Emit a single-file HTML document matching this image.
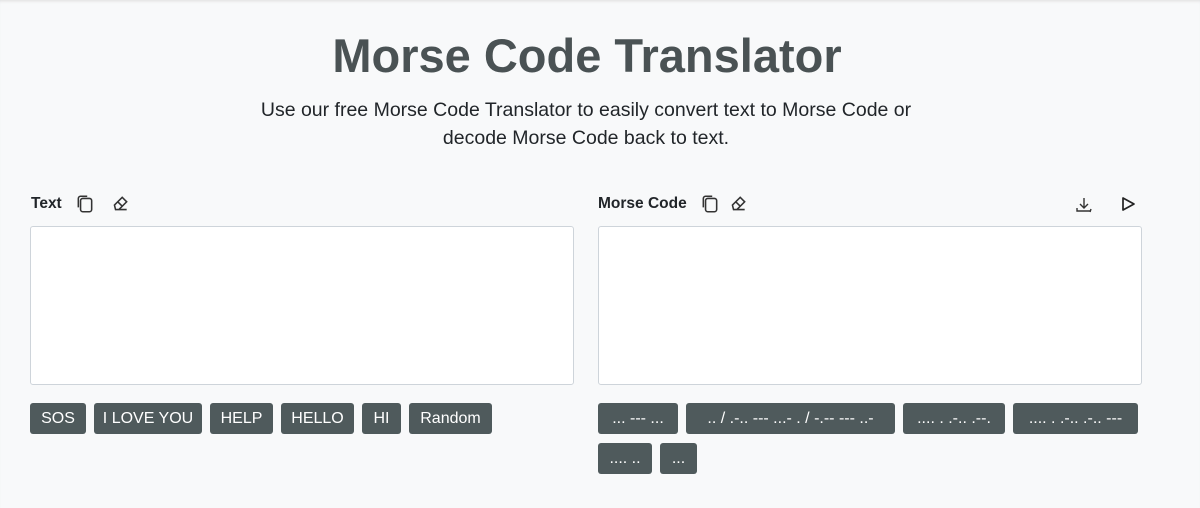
<!DOCTYPE html>
<html><head><style>
body{margin:0;width:1200px;height:508px;background:#f8f9fa;font-family:"Liberation Sans",sans-serif;position:relative;overflow:hidden;box-shadow:inset 0 3px 3px -2px #ddd}
h1{position:absolute;top:28px;left:-13px;width:1200px;margin:0;text-align:center;font-size:47px;font-weight:bold;color:#4a5254;letter-spacing:0}
p{position:absolute;top:96px;left:-14px;width:1200px;margin:0;text-align:center;font-size:19.5px;line-height:28px;color:#212529}
.lbl{position:absolute;top:195px;font-size:15.5px;font-weight:bold;color:#212529}
.ta{position:absolute;top:226px;width:542px;height:157px;background:#fff;border:1px solid #ced4da;border-radius:3px}
.b{position:absolute;height:31px;background:#4f5a5c;color:#fff;border-radius:3px;font-size:16px;line-height:31px;text-align:center}
svg{position:absolute}
</style></head><body>
<h1>Morse Code Translator</h1>
<p>Use our free Morse Code Translator to easily convert text to Morse Code or<br>decode Morse Code back to text.</p>
<div class="lbl" style="left:31px">Text</div>
<svg style="left:75px;top:194px" width="20" height="20" viewBox="0 0 18 18" fill="none" stroke="#333" stroke-width="1.4"><rect x="5" y="4" width="10" height="12" rx="2"/><path d="M3 12V4a2 2 0 0 1 2-2h6"/></svg>
<svg style="left:110px;top:194px" width="20" height="20" viewBox="0 0 18 18" fill="none" stroke="#333" stroke-width="1.4"><path d="M4 10l7-7 4 4-7 7H5zM7 7l4 4M8 14h7"/></svg>
<div class="lbl" style="left:598px">Morse Code</div>
<svg style="left:700px;top:194px" width="20" height="20" viewBox="0 0 18 18" fill="none" stroke="#333" stroke-width="1.4"><rect x="5" y="4" width="10" height="12" rx="2"/><path d="M3 12V4a2 2 0 0 1 2-2h6"/></svg>
<svg style="left:728px;top:194px" width="20" height="20" viewBox="0 0 18 18" fill="none" stroke="#333" stroke-width="1.4"><path d="M4 10l7-7 4 4-7 7H5zM7 7l4 4M8 14h7"/></svg>
<svg style="left:1074px;top:195px" width="20" height="20" viewBox="0 0 20 20" fill="none" stroke="#333" stroke-width="1.4"><path d="M10 3v10M6 9l4 4 4-4M3 13v3h13M17 14l-1 3"/></svg>
<svg style="left:1119px;top:195px" width="18" height="18" viewBox="0 0 18 18" fill="none" stroke="#222" stroke-width="1.7"><path d="M4 3l11 6-11 6z" stroke-linejoin="round"/></svg>
<div class="ta" style="left:30px"></div>
<div class="ta" style="left:598px"></div>
<div class="b" style="left:30px;top:403px;width:56px">SOS</div>
<div class="b" style="left:94px;top:403px;width:108px">I LOVE YOU</div>
<div class="b" style="left:210px;top:403px;width:63px">HELP</div>
<div class="b" style="left:281px;top:403px;width:73px">HELLO</div>
<div class="b" style="left:362px;top:403px;width:39px">HI</div>
<div class="b" style="left:409px;top:403px;width:83px">Random</div>
<div class="b" style="left:598px;top:403px;width:80px">... --- ...</div>
<div class="b" style="left:686px;top:403px;width:209px">.. / .-.. --- ...- . / -.-- --- ..-</div>
<div class="b" style="left:903px;top:403px;width:102px">.... . .-.. .--.</div>
<div class="b" style="left:1013px;top:403px;width:125px">.... . .-.. .-.. ---</div>
<div class="b" style="left:598px;top:443px;width:54px">.... ..</div>
<div class="b" style="left:660px;top:443px;width:37px">...</div>
</body></html>
